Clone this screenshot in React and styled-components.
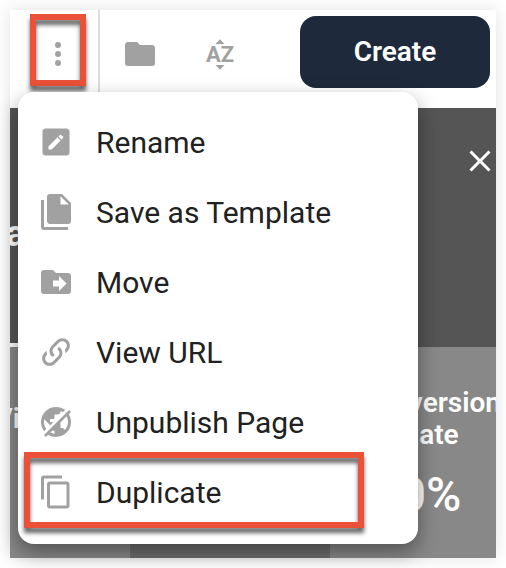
import React from "react";
import styled, { createGlobalStyle } from "styled-components";

const paths = {
	dots: "M12,16A2,2 0 0,1 14,18A2,2 0 0,1 12,20A2,2 0 0,1 10,18A2,2 0 0,1 12,16M12,10A2,2 0 0,1 14,12A2,2 0 0,1 12,14A2,2 0 0,1 10,12A2,2 0 0,1 12,10M12,4A2,2 0 0,1 14,6A2,2 0 0,1 12,8A2,2 0 0,1 10,6A2,2 0 0,1 12,4Z",
	folder: "M10,4H4C2.89,4 2,4.89 2,6V18A2,2 0 0,0 4,20H20A2,2 0 0,0 22,18V8C22,6.89 21.1,6 20,6H12L10,4Z",
	close: "M19,6.41L17.59,5L12,10.59L6.41,5L5,6.41L10.59,12L5,17.59L6.41,19L12,13.41L17.59,19L19,17.59L13.41,12L19,6.41Z",
	rename: "M19,3H5C3.89,3 3,3.89 3,5V19A2,2 0 0,0 5,21H19A2,2 0 0,0 21,19V5C21,3.89 20.1,3 19,3M16.7,9.35L15.7,10.35L13.65,8.3L14.65,7.3C14.86,7.08 15.21,7.08 15.42,7.3L16.7,8.58C16.92,8.79 16.92,9.14 16.7,9.35M7,14.94L13.06,8.88L15.12,10.94L9.06,17H7V14.94Z",
	template: "M15,7H20.5L15,1.5V7M8,0H16L22,6V18A2,2 0 0,1 20,20H8C6.89,20 6,19.1 6,18V2A2,2 0 0,1 8,0M4,4V22H20V24H4A2,2 0 0,1 2,22V4H4Z",
	move: "M14,18V15H10V11H14V8L19,13M20,6H12L10,4H4C2.89,4 2,4.89 2,6V18A2,2 0 0,0 4,20H20A2,2 0 0,0 22,18V8C22,6.89 21.1,6 20,6Z",
	link: "M10.59,13.41C11,13.8 11,14.44 10.59,14.83C10.2,15.22 9.56,15.22 9.17,14.83C7.22,12.88 7.22,9.71 9.17,7.76V7.76L12.71,4.22C14.66,2.27 17.83,2.27 19.78,4.22C21.73,6.17 21.73,9.34 19.78,11.29L18.29,12.78C18.3,11.96 18.17,11.14 17.89,10.36L18.36,9.88C19.54,8.71 19.54,6.81 18.36,5.64C17.19,4.46 15.29,4.46 14.12,5.64L10.59,9.17C9.41,10.34 9.41,12.24 10.59,13.41M13.41,9.17C13.8,8.78 14.44,8.78 14.83,9.17C16.78,11.12 16.78,14.29 14.83,16.24V16.24L11.29,19.78C9.34,21.73 6.17,21.73 4.22,19.78C2.27,17.83 2.27,14.66 4.22,12.71L5.71,11.22C5.7,12.04 5.83,12.86 6.11,13.65L5.64,14.12C4.46,15.29 4.46,17.19 5.64,18.36C6.81,19.54 8.71,19.54 9.88,18.36L13.41,14.83C14.59,13.66 14.59,11.76 13.41,10.59C13,10.2 13,9.56 13.41,9.17Z",
	unpublish: "M22,5.27L20.5,6.75C21.46,8.28 22,10.07 22,12A10,10 0 0,1 12,22C10.08,22 8.28,21.46 6.75,20.5L5.27,22L4,20.72L20.72,4L22,5.27M17.9,17.39C19.2,15.97 20,14.08 20,12C20,10.63 19.66,9.34 19.05,8.22L14.83,12.44C14.94,12.6 15,12.79 15,13V16H16C16.89,16 17.64,16.59 17.9,17.39M11,19.93V18C10.5,18 10.07,17.83 9.73,17.54L8.22,19.05C9.07,19.5 10,19.82 11,19.93M15,4.59V5A2,2 0 0,1 13,7H11V9A1,1 0 0,1 10,10H8V12H10.18L8.09,14.09L4.21,10.21C4.08,10.78 4,11.38 4,12C4,13.74 4.56,15.36 5.5,16.67L4.08,18.1C2.77,16.41 2,14.3 2,12A10,10 0 0,1 12,2C14.3,2 16.41,2.77 18.1,4.08L16.67,5.5C16.16,5.14 15.6,4.83 15,4.59Z",
	duplicate: "M19,21H8V7H19M19,5H8A2,2 0 0,0 6,7V21A2,2 0 0,0 8,23H19A2,2 0 0,0 21,21V7A2,2 0 0,0 19,5M16,1H4A2,2 0 0,0 2,3V17H4V3H16V1Z",
};

const items = [
	{ icon: "rename", label: "Rename" },
	{ icon: "template", label: "Save as Template" },
	{ icon: "move", label: "Move" },
	{ icon: "link", label: "View URL" },
	{ icon: "unpublish", label: "Unpublish Page" },
	{ icon: "duplicate", label: "Duplicate", marked: true },
];

const Icon = ({ name }) => (
	<Svg viewBox="0 0 24 24" aria-hidden="true">
		<path fillRule="evenodd" d={paths[name]} />
	</Svg>
);

const SortIcon = () => (
	<Svg viewBox="0 0 36 36" aria-hidden="true">
		<path d="M13.5 8L18 3.2L22.5 8ZM13.5 29H22.5L18 33.8Z" />
		<text x="18" y="26" textAnchor="middle">
			AZ
		</text>
	</Svg>
);

const App = () => {
	return (
		<Frame>
			<GlobalStyle />
			<Toolbar>
				<MoreButton aria-label="More actions">
					<Icon name="dots" />
					<MoreMarker />
				</MoreButton>
				<Tools>
					<IconButton aria-label="Folders">
						<Icon name="folder" />
					</IconButton>
					<IconButton aria-label="Sort">
						<SortIcon />
					</IconButton>
				</Tools>
				<CreateButton>Create</CreateButton>
			</Toolbar>
			<Hero>
				<h1>a</h1>
				<CloseButton aria-label="Close">
					<Icon name="close" />
				</CloseButton>
				<TabLine />
			</Hero>
			<Stats>
				<Stat>
					<h2>Visits</h2>
				</Stat>
				<Stat $dark />
				<Stat>
					<h2>Conversion Rate</h2>
					<p>0%</p>
				</Stat>
			</Stats>
			<Menu role="menu">
				{items.map((item) => (
					<MenuItem key={item.label} role="menuitem">
						<Icon name={item.icon} />
						{item.label}
						{item.marked && <ItemMarker />}
					</MenuItem>
				))}
			</Menu>
		</Frame>
	);
};

const GlobalStyle = createGlobalStyle`
	* {
		box-sizing: border-box;
		margin: 0;
		padding: 0;
	}
	body {
		background: #fff;
		font-family: Roboto, "Liberation Sans", sans-serif;
	}
	button {
		border: none;
		background: none;
		font: inherit;
		cursor: pointer;
	}
`;

const Frame = styled.main`
	position: relative;
	display: flex;
	flex-direction: column;
	min-height: calc(100vh - 20px);
	margin: 10px;
	background: #fff;
	box-shadow: 0 0 16px rgba(0, 0, 0, 0.12);
`;

const Svg = styled.svg`
	display: block;
	flex: none;
	width: 36px;
	height: 36px;
	fill: #a1a1a1;
	text {
		font-size: 22px;
		font-weight: 700;
	}
`;

const Toolbar = styled.header`
	display: flex;
	height: 98px;
`;

const IconButton = styled.button`
	display: flex;
	align-items: center;
	justify-content: center;
`;

const MoreButton = styled(IconButton)`
	position: relative;
	width: 90px;
	padding: 0 12px 10px 20px;
	border-right: 2px solid #ddd;
`;

const Tools = styled.div`
	display: flex;
	gap: 44px;
	padding: 0 22px 10px;
`;

const CreateButton = styled.button`
	width: 190px;
	height: 72px;
	margin: 6px 6px 0 auto;
	padding-bottom: 2px;
	border-radius: 16px;
	background: #1e293b;
	color: #fff;
	font-size: 28px;
	font-weight: 600;
`;

const Hero = styled.section`
	display: grid;
	grid-template-columns: 1fr auto;
	grid-template-rows: 1fr auto;
	height: 239px;
	overflow: hidden;
	background: #555;
	color: #fff;
	h1 {
		margin-left: -4px;
		padding-top: 104px;
		font-size: 36px;
		line-height: 44px;
	}
`;

const CloseButton = styled(IconButton)`
	align-self: start;
	margin-top: 35px;
	margin-right: -2px;
	svg {
		fill: #fff;
	}
`;

const TabLine = styled.div`
	width: 120px;
	height: 4px;
	background: #fff;
`;

// the first and last columns run out of the window
const Stats = styled.section`
	display: flex;
	flex: 1;
	justify-content: flex-start;
	overflow: hidden;
	background: #888;
	> :first-child {
		margin-left: -80px;
	}
`;

const Stat = styled.div`
	display: flex;
	flex: none;
	flex-direction: column;
	gap: 16px;
	width: 200px;
	padding: 40px 24px 0;
	background: ${({ $dark }) => ($dark ? "#6e6e6e" : "#888")};
	color: #fff;
	text-align: center;
	h2 {
		display: flex;
		align-items: center;
		justify-content: center;
		min-height: 64px;
		font-size: 28px;
		font-weight: 600;
		line-height: 32px;
	}
	p {
		font-size: 48px;
		font-weight: 500;
		line-height: 56px;
	}
`;

const Menu = styled.div`
	position: absolute;
	top: 82px;
	left: 8px;
	width: 400px;
	padding: 15px 0 17px;
	border-radius: 16px;
	background: #fff;
	box-shadow: 0 8px 20px rgba(0, 0, 0, 0.4);
`;

const MenuItem = styled.button`
	position: relative;
	display: flex;
	align-items: center;
	gap: 22px;
	width: 100%;
	height: 70px;
	padding: 0 20px;
	color: #212121;
	font-size: 30px;
	white-space: nowrap;
`;

const Marker = styled.span`
	position: absolute;
	border: 6px solid #ea5138;
	filter: drop-shadow(0 5px 2px rgba(0, 0, 0, 0.6));
	pointer-events: none;
`;

const MoreMarker = styled(Marker)`
	top: 4px;
	left: 20px;
	width: 56px;
	height: 72px;
`;

const ItemMarker = styled(Marker)`
	top: -5px;
	left: 6px;
	width: 340px;
	height: 76px;
`;

export default App;
